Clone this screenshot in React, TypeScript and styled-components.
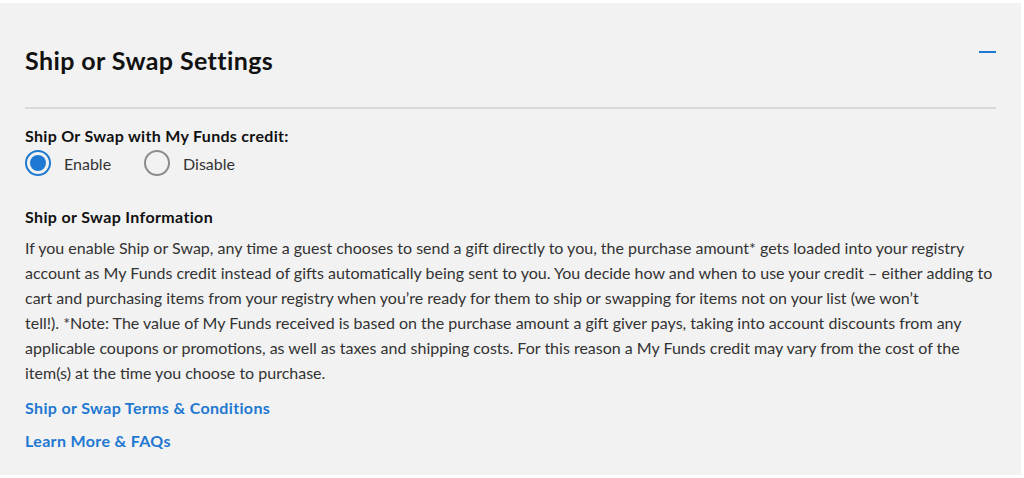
import React from 'react'
import styled, { createGlobalStyle } from 'styled-components'

const GlobalStyle = createGlobalStyle`
  html, body {
    margin: 0;
    padding: 0;
    background: #ffffff;
  }
  body {
    font-family: Lato, 'Open Sans', sans-serif;
    color: #333333;
  }
`

const Panel = styled.section`
  box-sizing: border-box;
  width: 1021px;
  height: 472px;
  margin-top: 3px;
  background: #f2f2f2;
`

const Header = styled.div`
  display: flex;
  justify-content: space-between;
  align-items: center;
  padding: 42px 25px 32px 25px;
`

const Title = styled.h2`
  margin: 0;
  font-size: 25px;
  line-height: 30px;
  font-weight: 700;
  letter-spacing: 0.4px;
  color: #111111;
`

const Collapse = styled.button`
  display: block;
  width: 17px;
  height: 2px;
  padding: 0;
  border: 0;
  margin-top: -17px;
  background: #1f78d1;
  cursor: pointer;
`

const Divider = styled.hr`
  margin: 0 25px;
  height: 2px;
  border: 0;
  background: #d9d9d9;
`

const Body = styled.div`
  display: flex;
  flex-direction: column;
  padding: 0 25px;
`

const Label = styled.div`
  margin-top: 17px;
  font-size: 16px;
  line-height: 20px;
  font-weight: 700;
  letter-spacing: 0.3px;
  color: #111111;
`

const RadioRow = styled.div`
  display: flex;
  align-items: center;
  column-gap: 33px;
  margin-top: 4px;
`

const RadioOption = styled.label`
  display: flex;
  align-items: center;
  column-gap: 13px;
  font-size: 16px;
  color: #333333;
`

const RadioDot = styled.span<{ $checked?: boolean }>`
  box-sizing: border-box;
  display: flex;
  align-items: center;
  justify-content: center;
  width: 26px;
  height: 26px;
  border-radius: 50%;
  border: 2px solid ${p => (p.$checked ? '#1f78d1' : '#8c8c8c')};

  &::after {
    content: '';
    display: ${p => (p.$checked ? 'block' : 'none')};
    width: 16px;
    height: 16px;
    border-radius: 50%;
    background: #1f78d1;
  }
`

const SubTitle = styled.h3`
  margin: 31px 0 0 0;
  font-size: 16px;
  line-height: 20px;
  font-weight: 700;
  letter-spacing: 0.35px;
  color: #111111;
`

const Paragraph = styled.p`
  margin: 8px 0 0 0;
  font-size: 16px;
  line-height: 25px;
  color: #333333;
`

const LinkItem = styled.a`
  display: block;
  margin-top: 13px;
  font-size: 16px;
  line-height: 20px;
  font-weight: 700;
  letter-spacing: 0.35px;
  color: #1f78d1;
  text-decoration: none;
`

const Radio = ({ label, checked }: { label: string; checked?: boolean }) => (
  <RadioOption>
    <RadioDot $checked={checked} />
    {label}
  </RadioOption>
)

const App = () => {
  return (
    <>
      <GlobalStyle />
      <Panel>
        <Header>
          <Title>Ship or Swap Settings</Title>
          <Collapse aria-label='Collapse' />
        </Header>
        <Divider />
        <Body>
          <Label>Ship Or Swap with My Funds credit:</Label>
          <RadioRow>
            <Radio label='Enable' checked />
            <Radio label='Disable' />
          </RadioRow>
          <SubTitle>Ship or Swap Information</SubTitle>
          <Paragraph>
            If you enable Ship or Swap, any time a guest chooses to send a gift directly to you, the purchase amount* gets loaded into your registry
            <br />
            account as My Funds credit instead of gifts automatically being sent to you. You decide how and when to use your credit – either adding to
            <br />
            cart and purchasing items from your registry when you’re ready for them to ship or swapping for items not on your list (we won’t
            <br />
            tell!). *Note: The value of My Funds received is based on the purchase amount a gift giver pays, taking into account discounts from any
            <br />
            applicable coupons or promotions, as well as taxes and shipping costs. For this reason a My Funds credit may vary from the cost of the
            <br />
            item(s) at the time you choose to purchase.
          </Paragraph>
          <LinkItem href='#'>Ship or Swap Terms &amp; Conditions</LinkItem>
          <LinkItem href='#'>Learn More &amp; FAQs</LinkItem>
        </Body>
      </Panel>
    </>
  )
}

export default App
